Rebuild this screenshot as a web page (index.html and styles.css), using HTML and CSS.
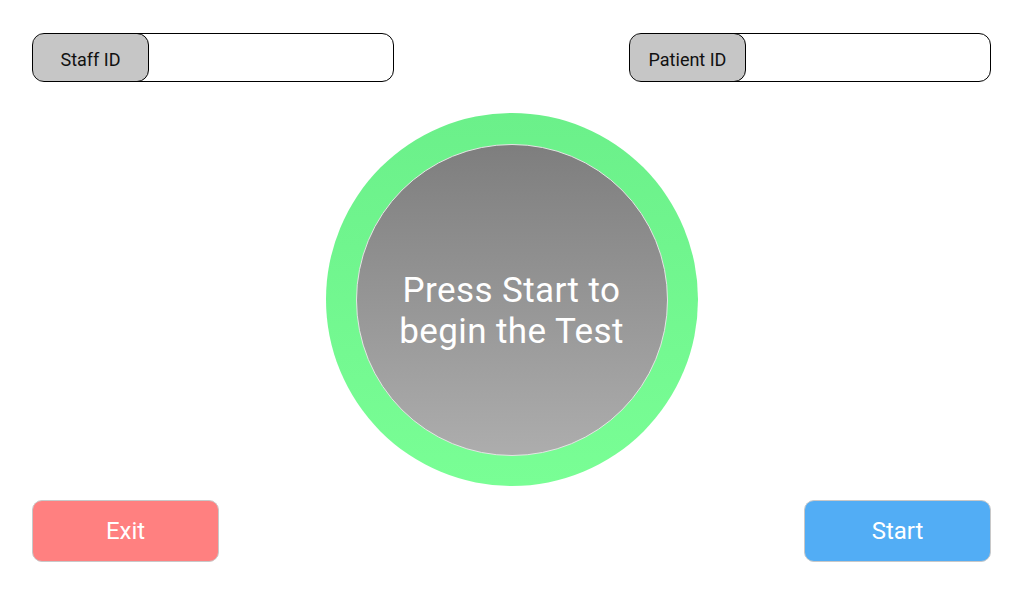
FILE: index.html
```html
<!DOCTYPE html>
<html>
<head>
<meta charset="utf-8">
<link rel="stylesheet" href="styles.css">
</head>
<body>
<div class="screen">
  <div class="top-row">
    <div class="id-field">
      <div class="id-label">Staff ID</div>
      <div class="id-input"></div>
    </div>
    <div class="id-field">
      <div class="id-label">Patient ID</div>
      <div class="id-input"></div>
    </div>
  </div>
  <div class="middle">
    <div class="ring">
      <div class="core">Press Start to<br>begin the Test</div>
    </div>
  </div>
  <div class="bottom-row">
    <button class="btn btn-exit">Exit</button>
    <button class="btn btn-start">Start</button>
  </div>
</div>
</body>
</html>
```
FILE: styles.css
```css
html, body {
  margin: 0;
  padding: 0;
  background: #ffffff;
  font-family: Roboto, "Liberation Sans", sans-serif;
}
.screen {
  width: 1024px;
  height: 600px;
  box-sizing: border-box;
  padding: 33px 33px 0 32px;
  display: flex;
  flex-direction: column;
}
.top-row {
  display: flex;
  justify-content: space-between;
  height: 49px;
}
.id-field {
  width: 362px;
  height: 49px;
  box-sizing: border-box;
  border: 1px solid #000;
  border-radius: 12px;
  display: flex;
  overflow: hidden;
}
.id-label {
  width: 117px;
  box-sizing: border-box;
  margin: -1px 0 0 -1px;
  height: 49px;
  padding-top: 3px;
  background: #c6c6c6;
  border: 1px solid #000;
  border-radius: 12px;
  display: flex;
  align-items: center;
  justify-content: center;
  font-size: 18px;
  color: #111;
}
.id-input {
  flex: 1;
}
.middle {
  display: flex;
  justify-content: center;
  margin-top: 31px;
}
.ring {
  width: 372px;
  height: 373px;
  border-radius: 50%;
  background: linear-gradient(to bottom, #6bf08a, #79fe95);
  display: flex;
  align-items: center;
  justify-content: center;
}
.core {
  width: 312px;
  height: 312px;
  box-sizing: border-box;
  border-radius: 50%;
  border: 1px solid #e4e4e4;
  background: linear-gradient(to bottom, #7e7e7e, #adadad);
  color: #ffffff;
  font-size: 35px;
  letter-spacing: 0.4px;
  line-height: 41px;
  text-align: center;
  display: flex;
  align-items: center;
  justify-content: center;
  padding-top: 23px;
}
.bottom-row {
  display: flex;
  justify-content: space-between;
  margin-top: 14px;
}
.btn {
  width: 187px;
  height: 62px;
  border: 1px solid #c8c8c8;
  border-radius: 10px;
  color: #ffffff;
  font-family: Roboto, "Liberation Sans", sans-serif;
  font-size: 24px;
  padding: 0;
}
.btn-exit {
  background: #ff8080;
}
.btn-start {
  background: #52adf5;
}
```
